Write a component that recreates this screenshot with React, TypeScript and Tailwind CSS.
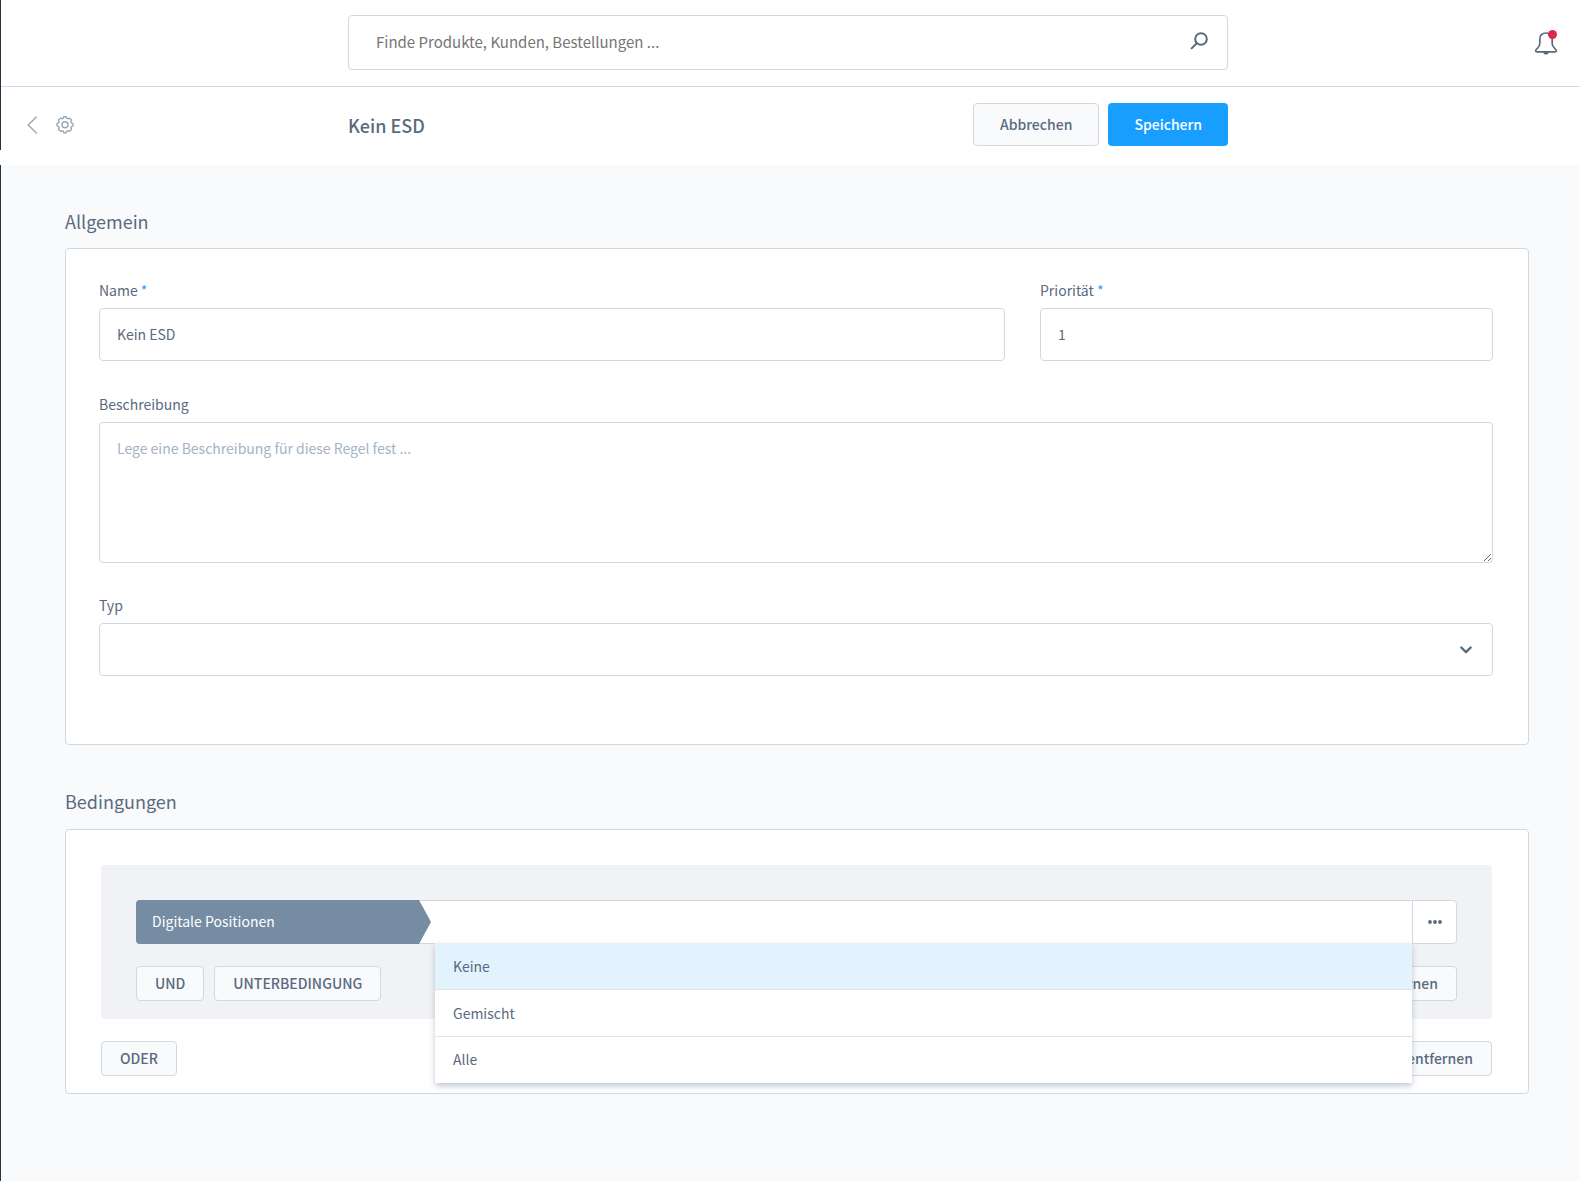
import React from "react";

const inputClass =
  "block h-[53px] w-full rounded border border-[#d1d9e0] bg-white px-[17px] pb-0.5 text-[14px] outline-none placeholder:text-[#a4b4c6]";

function Field({
  id,
  label,
  required,
  children,
}: {
  id: string;
  label: string;
  required?: boolean;
  children: React.ReactNode;
}) {
  return (
    <div>
      <label htmlFor={id} className="mb-2 block text-[14px] leading-5">
        {label}
        {required && <span className="text-[#189eff]"> *</span>}
      </label>
      {children}
    </div>
  );
}

function SmallButton({ children }: { children: React.ReactNode }) {
  return (
    <button
      type="button"
      className="h-[35px] rounded border border-[#d1d9e0] bg-[#f9fafb] px-[18px] text-[14px] font-medium whitespace-nowrap"
    >
      {children}
    </button>
  );
}

function GearIcon() {
  return (
    <svg width="20" height="20" viewBox="0 0 20 20" fill="none" stroke="currentColor" strokeWidth="1.4" strokeLinejoin="round">
      <path d="M8.300 3.200Q8.400 1.700 9 1.700h2q.6 0 .7 1.500l1.300.6q1.100-1 1.600-.6l1.900 1.900q.4.5-.6 1.600l.5 1.300q1.600.1 1.600.7v2q0 .6-1.600.7l-.5 1.300q1 1.100.6 1.600l-1.900 1.900q-.5.4-1.600-.6l-1.300.5q-.1 1.600-.7 1.600H9q-.6 0-.7-1.600L7 15.600q-1.100 1-1.600.6l-1.900-1.900q-.4-.5.6-1.600l-.5-1.300Q2 11.300 2 10.700v-2Q2 8.100 3.600 8l.5-1.300q-1-1.100-.6-1.600l1.900-1.900q.5-.4 1.600.6z" />
      <circle cx="10" cy="9.700" r="3" />
    </svg>
  );
}

export default function App() {
  return (
    <div className="min-h-screen bg-[#f9fafb] font-['Noto_Sans_CJK_JP',sans-serif] text-[#596a80]">
      <header className="border-l border-[#2a3345] bg-white">
        <div className="grid h-[87px] grid-cols-[1fr_minmax(0,880px)_1fr] items-center border-b border-[#d1d9e0] pr-[5px]">
          <div />
          <div className="mb-px flex h-[55px] items-center rounded border border-[#d1d9e0] pr-[18px] pl-[27px]">
            <input
              type="search"
              aria-label="Suche"
              placeholder="Finde Produkte, Kunden, Bestellungen ..."
              className="h-full min-w-0 flex-1 bg-transparent pb-0.5 text-[15px] outline-none placeholder:text-[#757575]"
            />
            <button type="button" aria-label="Suchen" className="mb-1">
              <svg width="20" height="20" viewBox="0 0 20 20" fill="none" stroke="currentColor" strokeWidth="2" strokeLinecap="round">
                <circle cx="12" cy="8" r="5.8" />
                <path d="M7.8 12.2 2.6 17.4" />
              </svg>
            </button>
          </div>
          <button type="button" aria-label="Benachrichtigungen" className="relative mr-[17px] justify-self-end">
            <svg width="24" height="26" viewBox="0 0 24 26" fill="none" stroke="currentColor" strokeWidth="1.7" strokeLinejoin="round">
              <path d="M12 3C8 3 5.800 5.700 5.800 9.500v4.200c0 2.600-1.600 3.700-3.700 6.100-.9 1.100-.5 2 .8 2h18.200c1.300 0 1.700-.9.8-2-2.100-2.400-3.700-3.500-3.700-6.100V9.500C18.200 5.700 16 3 12 3z" />
              <path d="M9.200 22c.2 1.600 1.400 2.600 2.800 2.600s2.600-1 2.800-2.600z" fill="currentColor" stroke="none" />
            </svg>
            <span className="absolute top-0 right-px size-[9px] rounded-full bg-[#de294c]" />
          </button>
        </div>
        <div className="grid h-[63px] grid-cols-[1fr_minmax(0,880px)_1fr] items-center pt-3 pr-[5px]">
          <div className="flex items-center gap-[17px] pl-[25px] text-[#9aa8b5]">
            <a href="#back" aria-label="Zurück">
              <svg width="12" height="20" viewBox="0 0 12 20" fill="none" stroke="currentColor" strokeWidth="1.4" strokeLinecap="round" strokeLinejoin="round">
                <path d="M10.300 2 2.200 10l8.100 8" />
              </svg>
            </a>
            <button type="button" aria-label="Einstellungen">
              <GearIcon />
            </button>
          </div>
          <div className="flex items-center justify-between">
            <h1 className="text-[18px] leading-6 font-medium">Kein ESD</h1>
            <div className="flex gap-[9px]">
              <button type="button" className="h-[43px] rounded border border-[#d1d9e0] bg-[#f9fafb] px-[26px] text-[14px] font-medium">
                Abbrechen
              </button>
              <button type="button" className="h-[43px] rounded bg-[#189eff] px-[26px] text-[14px] font-medium text-white">
                Speichern
              </button>
            </div>
          </div>
          <div />
        </div>
      </header>
      <div className="h-[15px] bg-white" />

      <main className="min-h-[1016px] border-l border-[#2a3345] pt-11 pr-[51px] pl-16">
        <section>
          <h2 className="text-[18px] leading-6">Allgemein</h2>
          <form className="mt-[15px] rounded border border-[#d1d9e0] bg-white pt-[31px] pr-[35px] pb-[68px] pl-[33px]">
            <div className="grid grid-cols-[2fr_1fr] gap-[35px]">
              <Field id="name" label="Name" required>
                <input id="name" type="text" defaultValue="Kein ESD" className={inputClass} />
              </Field>
              <Field id="priority" label="Priorität" required>
                <input id="priority" type="text" defaultValue="1" className={inputClass} />
              </Field>
            </div>
            <div className="mt-[33px]">
              <Field id="description" label="Beschreibung">
                <textarea
                  id="description"
                  placeholder="Lege eine Beschreibung für diese Regel fest ..."
                  className="block h-[141px] w-full resize-y rounded border border-[#d1d9e0] bg-white px-[17px] py-[13px] text-[14px] leading-6 outline-none placeholder:text-[#a4b4c6]"
                />
              </Field>
            </div>
            <div className="mt-8">
              <Field id="type" label="Typ">
                <div className="relative">
                  <select id="type" className={inputClass + " appearance-none"} defaultValue="">
                    <option value=""></option>
                  </select>
                  <svg className="pointer-events-none absolute top-5 right-5" width="14" height="14" viewBox="0 0 14 14" fill="none" stroke="currentColor" strokeWidth="2.400" strokeLinecap="round" strokeLinejoin="round">
                    <path d="M2.300 4.500 7 9.200l4.700-4.700" />
                  </svg>
                </div>
              </Field>
            </div>
          </form>
        </section>

        <section className="mt-11">
          <h2 className="text-[18px] leading-6">Bedingungen</h2>
          <div className="mt-4 rounded border border-[#d1d9e0] bg-white pt-[35px] pr-9 pb-[17px] pl-[35px]">
            <div className="rounded bg-[#f0f2f5] px-[35px] pt-[35px] pb-[18px]">
              <div className="relative flex h-[44px] rounded border border-[#d1d9e0] bg-white">
                <div className="-my-px -ml-px flex">
                  <div className="flex w-[283px] items-center rounded-l bg-[#758ca3] pb-0.5 pl-4 text-[14px] text-white">
                    Digitale Positionen
                  </div>
                  <svg width="12" height="44" viewBox="0 0 12 44" className="text-[#758ca3]">
                    <path d="M0 0 12 22 0 44z" fill="currentColor" />
                  </svg>
                </div>
                <div className="relative ml-1 flex-1">
                  <input
                    type="text"
                    role="combobox"
                    aria-label="Digitale Positionen"
                    aria-expanded="true"
                    aria-controls="product-state-options"
                    className="h-full w-full bg-transparent px-[18px] text-[14px] outline-none"
                  />
                  <ul
                    id="product-state-options"
                    role="listbox"
                    className="absolute top-[42px] right-0 left-0 z-10 divide-y divide-[#dde3e9] bg-white text-[14px] shadow-[0_3px_6px_0_rgba(120,138,155,0.45)]"
                  >
                    <li role="option" aria-selected="true" className="flex h-[47px] items-center bg-[#e2f3fe] px-[18px]">
                      Keine
                    </li>
                    <li role="option" aria-selected="false" className="flex h-[47px] items-center px-[18px]">
                      Gemischt
                    </li>
                    <li role="option" aria-selected="false" className="flex h-[46px] items-center px-[18px] pb-0.5">
                      Alle
                    </li>
                  </ul>
                </div>
                <button type="button" aria-label="Weitere Aktionen" className="flex w-[44px] items-center justify-center border-l border-[#d1d9e0]">
                  <svg width="14" height="4" viewBox="0 0 14 4" fill="currentColor">
                    <circle cx="2" cy="2" r="1.900" />
                    <circle cx="7" cy="2" r="1.900" />
                    <circle cx="12" cy="2" r="1.900" />
                  </svg>
                </button>
              </div>
              <div className="mt-[22px] flex justify-between">
                <div className="flex gap-2.5">
                  <SmallButton>UND</SmallButton>
                  <SmallButton>UNTERBEDINGUNG</SmallButton>
                </div>
                <SmallButton>Entfernen</SmallButton>
              </div>
            </div>
            <div className="mt-[22px] flex justify-between">
              <SmallButton>ODER</SmallButton>
              <SmallButton>Alle entfernen</SmallButton>
            </div>
          </div>
        </section>
      </main>
    </div>
  );
}
